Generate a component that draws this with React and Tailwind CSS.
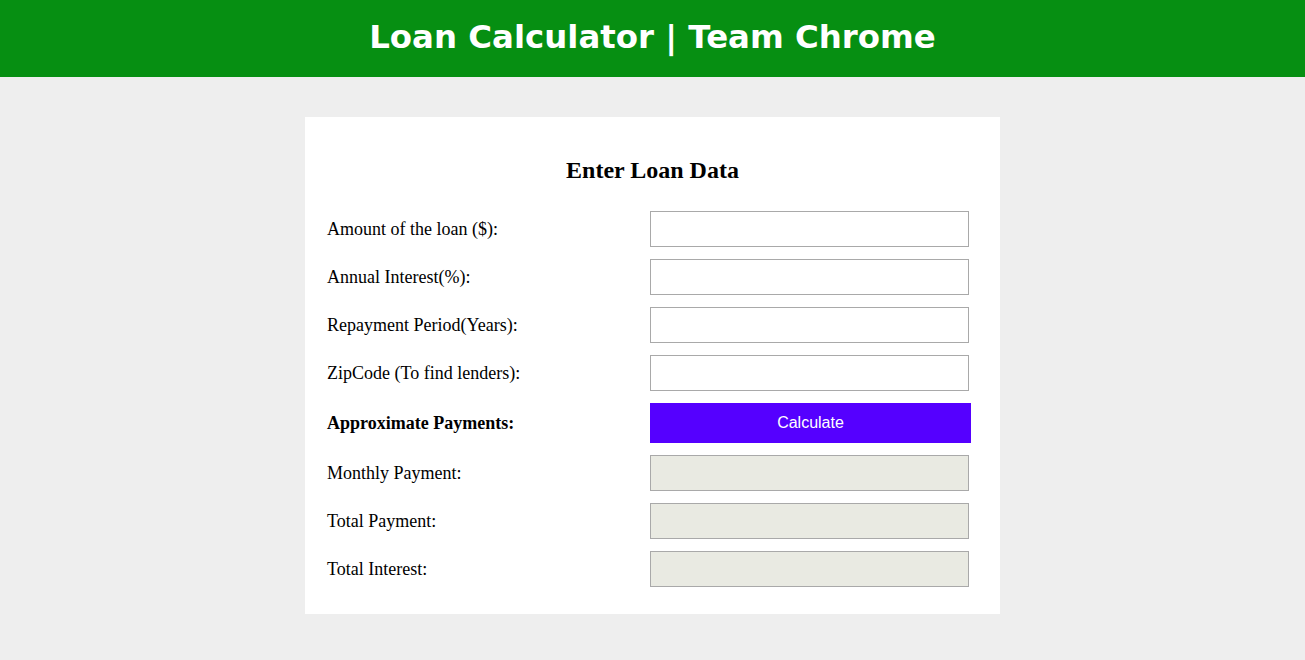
import React from 'react';

const inputRows = [
    'Amount of the loan ($):',
    'Annual Interest(%):',
    'Repayment Period(Years):',
    'ZipCode (To find lenders):',
];

const outputRows = ['Monthly Payment:', 'Total Payment:', 'Total Interest:'];

const App = () => {
    return (
        <div className="min-h-[660px] bg-[#eeeeee]">
            <header className="h-[77px] bg-[#068f12] flex items-center justify-center pb-[3px]">
                <h1
                    className="text-white text-[32.4px] font-bold leading-none"
                    style={{ fontFamily: '"DejaVu Sans", Verdana, sans-serif' }}
                >
                    Loan Calculator | Team Chrome
                </h1>
            </header>

            <div className="flex justify-center pt-[40px]">
                <div
                    className="w-[695px] bg-white pt-[40px] pb-[27px] pl-[22px]"
                    style={{ fontFamily: '"Liberation Serif", "Times New Roman", serif' }}
                >
                    <h2 className="text-center text-[24px] font-bold leading-[26px] mb-[28px] pr-[22px] text-black">
                        Enter Loan Data
                    </h2>

                    <div className="grid grid-cols-[323px_321px] gap-y-[12px] items-center">
                        {inputRows.map((label) => (
                            <React.Fragment key={label}>
                                <label className="text-[18px] text-black">{label}</label>
                                <input
                                    type="text"
                                    className="w-[319px] h-[36px] border border-[#a9a9a9] bg-white outline-none"
                                />
                            </React.Fragment>
                        ))}

                        <span className="text-[18px] font-bold text-black">Approximate Payments:</span>
                        <button
                            type="button"
                            className="w-[321px] h-[40px] bg-[#5500ff] text-white text-[16px]"
                            style={{ fontFamily: '"Liberation Sans", Arial, sans-serif' }}
                        >
                            Calculate
                        </button>

                        {outputRows.map((label) => (
                            <React.Fragment key={label}>
                                <label className="text-[18px] text-black">{label}</label>
                                <input
                                    type="text"
                                    readOnly
                                    className="w-[319px] h-[36px] border border-[#a9a9a9] bg-[#e9eae2] outline-none"
                                />
                            </React.Fragment>
                        ))}
                    </div>
                </div>
            </div>
        </div>
    );
};

export default App;
